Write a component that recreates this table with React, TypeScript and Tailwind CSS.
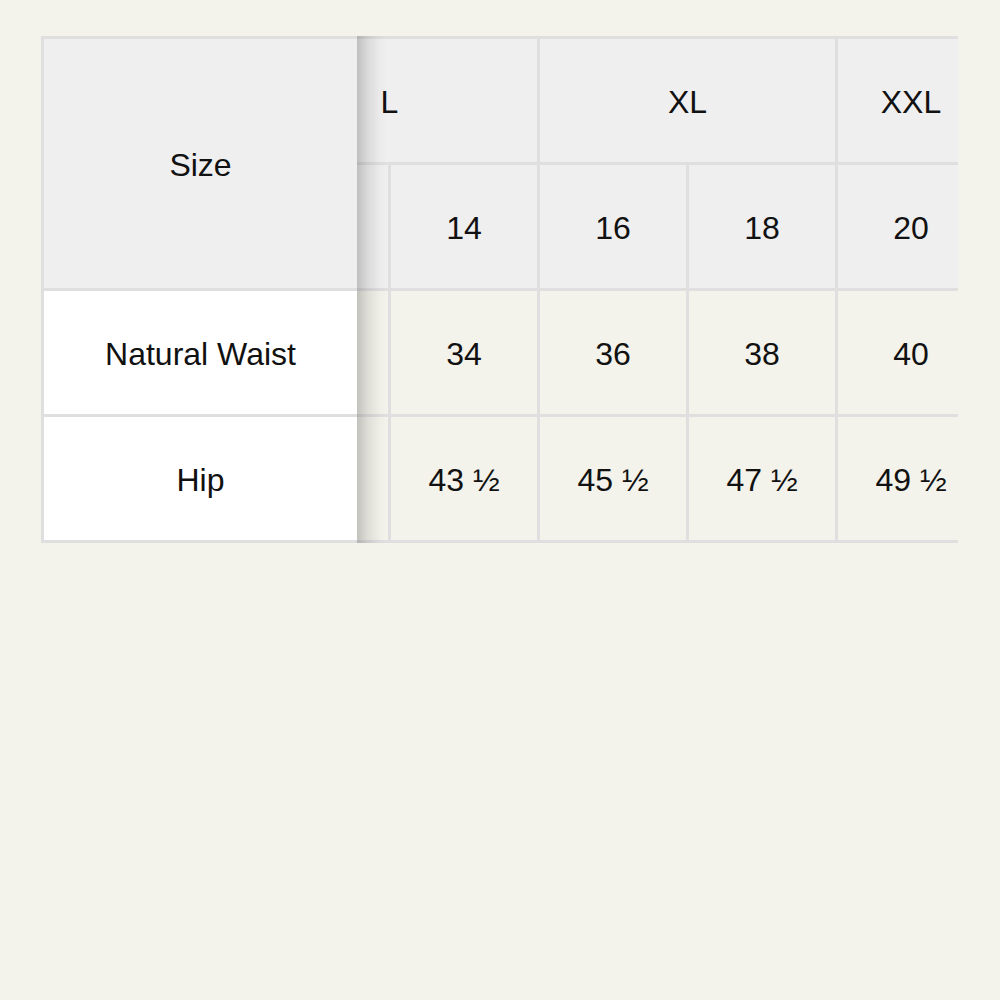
import { useLayoutEffect, useRef } from "react";

const groups = [
  { label: "L", span: 2 },
  { label: "XL", span: 2 },
  { label: "XXL", span: 1 },
];

const sizes = ["12", "14", "16", "18", "20"];
const waist = ["32", "34", "36", "38", "40"];
const hip = ["41 ½", "43 ½", "45 ½", "47 ½", "49 ½"];

const cell = "flex items-center justify-center pt-[2px]";

const SizeChart = () => {
  const scroller = useRef<HTMLDivElement>(null);

  // the chart is shown scrolled a little to the right
  useLayoutEffect(() => {
    if (scroller.current) scroller.current.scrollLeft = 115;
  }, []);

  return (
    <div className="ml-[41px] mr-[42px] flex overflow-hidden bg-[#dfdfdf] py-[3px] pl-[3px]">
      <div className="relative z-10 flex w-[313px] shrink-0 flex-col gap-[3px] bg-[#dfdfdf]">
        <div className={`${cell} h-[249px] bg-[#efefef]`}>Size</div>
        <div className={`${cell} h-[123px] bg-white`}>Natural Waist</div>
        <div className={`${cell} h-[123px] bg-white`}>Hip</div>
        {/* scroll shadow cast over the columns */}
        <div className="pointer-events-none absolute -top-[3px] -bottom-[3px] left-full w-[30px] bg-[linear-gradient(to_right,rgba(0,0,0,0.2),rgba(0,0,0,0.09)_35%,rgba(0,0,0,0.02)_75%,transparent)]" />
      </div>
      <div
        ref={scroller}
        className="min-w-0 flex-1 overflow-x-auto [scrollbar-width:none]"
      >
        <div className="grid w-max grid-cols-[repeat(5,146px)] grid-rows-[repeat(4,123px)] gap-[3px]">
          {groups.map((g) => (
            <div
              key={g.label}
              className={`${cell} bg-[#efefef] ${g.span === 2 ? "col-span-2" : "col-span-1"}`}
            >
              {g.label}
            </div>
          ))}
          {sizes.map((s) => (
            <div key={s} className={`${cell} bg-[#efefef]`}>
              {s}
            </div>
          ))}
          {waist.map((w) => (
            <div key={w} className={`${cell} bg-[#f3f2eb]`}>
              {w}
            </div>
          ))}
          {hip.map((h) => (
            <div key={h} className={`${cell} bg-[#f3f2eb]`}>
              {h}
            </div>
          ))}
        </div>
      </div>
    </div>
  );
};

export default function App() {
  return (
    <div className="min-h-screen bg-[#f3f2eb] pt-[36px] font-['Liberation_Sans',Arial,sans-serif] text-[32px] text-[#111]">
      <SizeChart />
    </div>
  );
}
